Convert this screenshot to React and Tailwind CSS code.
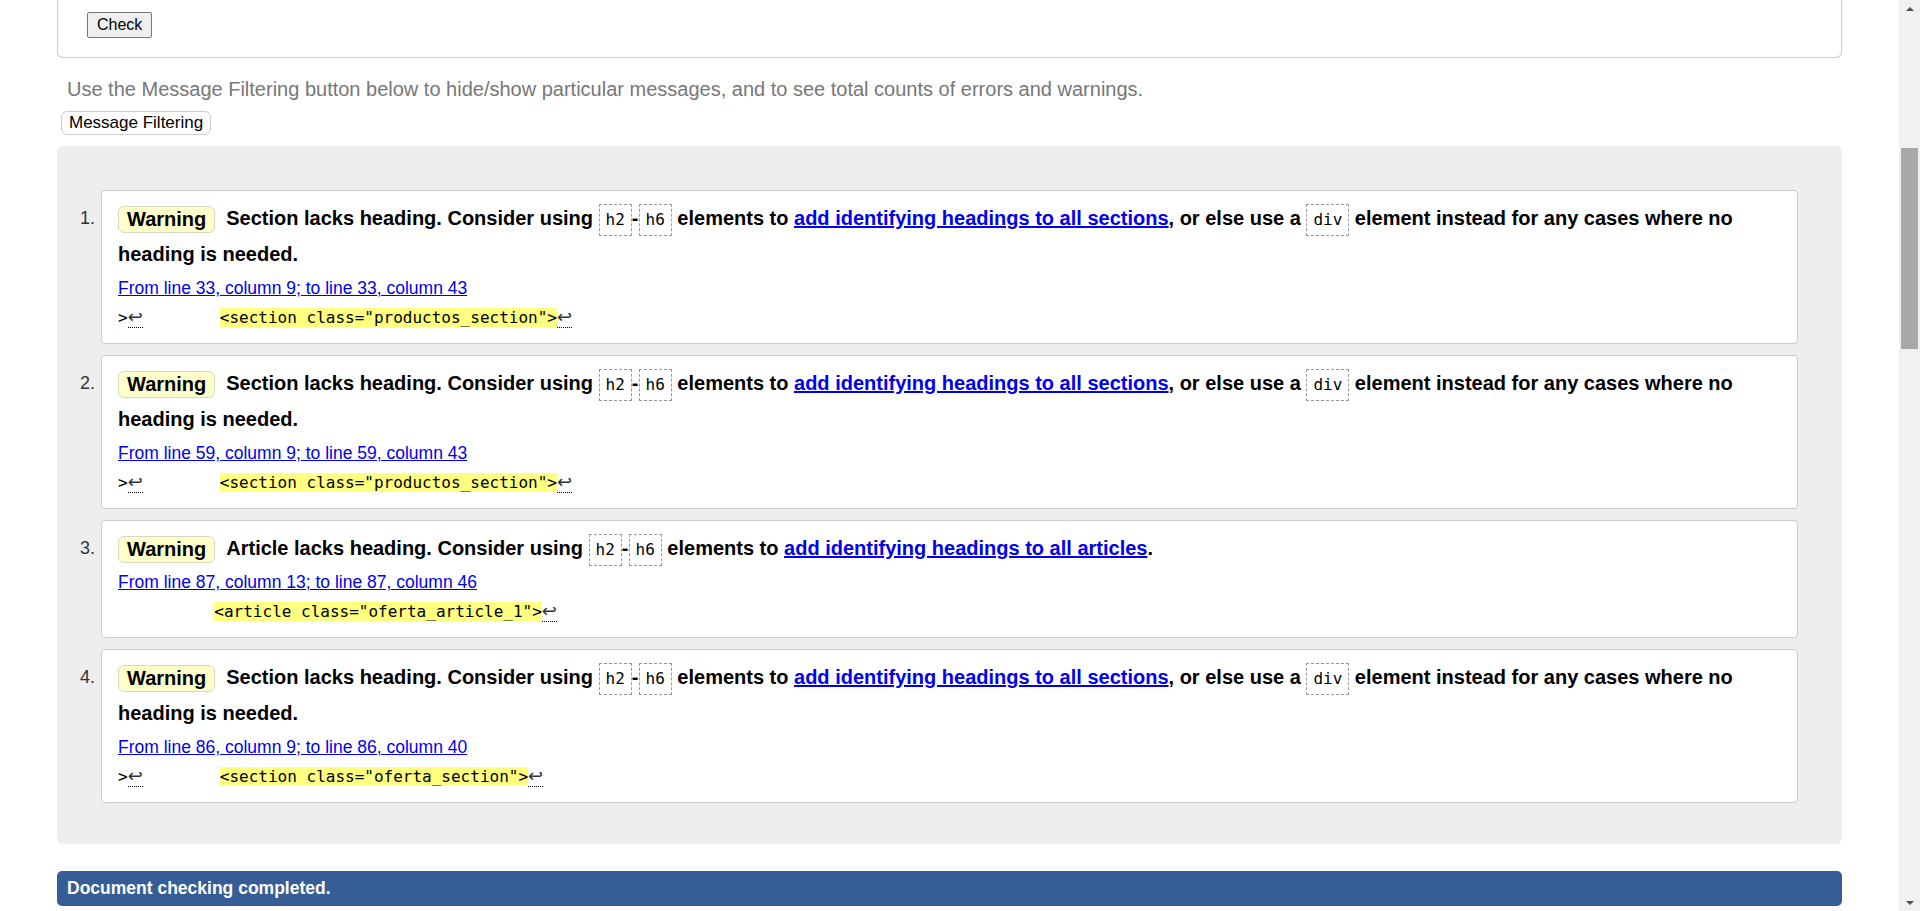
import React from "react";

const sans = { fontFamily: '"Liberation Sans", Arial, sans-serif' };

// messages from the checker
const messages = [
  {
    kind: "section",
    from: "From line 33, column 9; to line 33, column 43",
    indent: ">",
    code: '<section class="productos_section">',
  },
  {
    kind: "section",
    from: "From line 59, column 9; to line 59, column 43",
    indent: ">",
    code: '<section class="productos_section">',
  },
  {
    kind: "article",
    from: "From line 87, column 13; to line 87, column 46",
    indent: null,
    code: '<article class="oferta_article_1">',
  },
  {
    kind: "section",
    from: "From line 86, column 9; to line 86, column 40",
    indent: ">",
    code: '<section class="oferta_section">',
  },
];

function Code({ children }) {
  return (
    <code className="inline-block border border-dashed border-[#999] px-[6px] py-[3px] font-['DejaVu_Sans_Mono',monospace] text-[16px] font-normal leading-[24px] align-middle">
      {children}
    </code>
  );
}

function Lf() {
  return (
    <span className="border-b border-dotted border-black font-['DejaVu_Sans',sans-serif] text-[18px] leading-[20px] text-[#333]">↩</span>
  );
}

function MessageText({ kind }) {
  if (kind === "article") {
    return (
      <>
        Article lacks heading. Consider using <Code>h2</Code>-<Code>h6</Code> elements to{" "}
        <a href="#" className="text-[#0000ee] underline">
          add identifying headings to all articles
        </a>
        .
      </>
    );
  }
  return (
    <>
      Section lacks heading. Consider using <Code>h2</Code>-<Code>h6</Code> elements to{" "}
      <a href="#" className="text-[#0000ee] underline">
        add identifying headings to all sections
      </a>
      , or else use a <Code>div</Code> element instead for any cases where no heading is needed.
    </>
  );
}

function MessageCard({ msg, index }) {
  return (
    <li className="flex">
      <span className="w-[44px] shrink-0 pr-[6px] pt-[10px] text-right text-[18px] leading-[36px] text-[#333]">
        {index + 1}.
      </span>
      <div className="flex-1 rounded-[4px] border border-[#ccc] bg-white pl-[16px] pr-[16px] pt-[9px] pb-[13px]">
        <p className="text-[20px] font-bold leading-[36px] text-black">
          <strong className="mr-[11px] inline-block rounded-[6px] border border-[#d8d8c0] bg-[#ffffcc] px-[8px] align-middle leading-[25px]">
            Warning
          </strong>
          <MessageText kind={msg.kind} />
        </p>
        <p className="mt-[4px] text-[17.5px] leading-[24px]">
          <a href="#" className="text-[#0000ee] underline">
            {msg.from}
          </a>
        </p>
        <p className="mt-[6px] h-[24px] whitespace-pre font-['DejaVu_Sans_Mono',monospace] text-[16px] leading-[24px] text-black">
          {msg.indent ? (
            <>
              {">"}
              <Lf />
              {"        "}
            </>
          ) : (
            "          "
          )}
          <mark className="bg-[#ffff80] text-black">{msg.code}</mark>
          <Lf />
        </p>
      </div>
    </li>
  );
}

export default function App() {
  return (
    <div className="flex h-[911px] w-full overflow-hidden bg-white text-black" style={sans}>
      <div className="flex-1">
        <div className="mx-[57px]">
          {/* form panel, top cut off by scroll */}
          <div className="h-[58px] rounded-b-[6px] border-x border-b border-[#ccc] pl-[29px] pt-[12px]">
            <button className="h-[26px] rounded-[2px] border border-[#767676] bg-[#efefef] px-[9px] text-[16px] leading-[22px] text-black">
              Check
            </button>
          </div>

          <p className="mt-[19px] pl-[10px] text-[20px] leading-[24px] text-[#777]">
            Use the Message Filtering button below to hide/show particular messages, and to see total counts of errors and warnings.
          </p>
          <button className="ml-[4px] mt-[10px] h-[24px] rounded-[6px] border border-[#ccc] bg-white px-[7px] text-[17px] leading-[22px] text-black">
            Message Filtering
          </button>

          {/* results */}
          <div className="mt-[11px] rounded-[6px] bg-[#eeeeee] pb-[41px] pr-[44px] pt-[44px]">
            <ol className="flex flex-col gap-[11px]">
              {messages.map((m, i) => (
                <MessageCard key={i} msg={m} index={i} />
              ))}
            </ol>
          </div>

          <div className="mt-[27px] h-[35px] rounded-[5px] bg-[#365d96] pl-[10px] text-[17.5px] font-bold leading-[35px] text-white">
            Document checking completed.
          </div>
        </div>
      </div>

      {/* browser scrollbar */}
      <div className="flex w-[21px] shrink-0 flex-col items-center bg-[#f1f1f1]">
        <div className="flex h-[17px] items-center justify-center">
          <div className="h-0 w-0 border-x-[4px] border-b-[4px] border-x-transparent border-b-[#505050]" />
        </div>
        <div className="mt-[131px] h-[201px] w-[17px] bg-[#a8a8a8]" />
        <div className="flex-1" />
        <div className="flex h-[17px] items-center justify-center">
          <div className="h-0 w-0 border-x-[4px] border-t-[4px] border-x-transparent border-t-[#505050]" />
        </div>
      </div>
    </div>
  );
}
